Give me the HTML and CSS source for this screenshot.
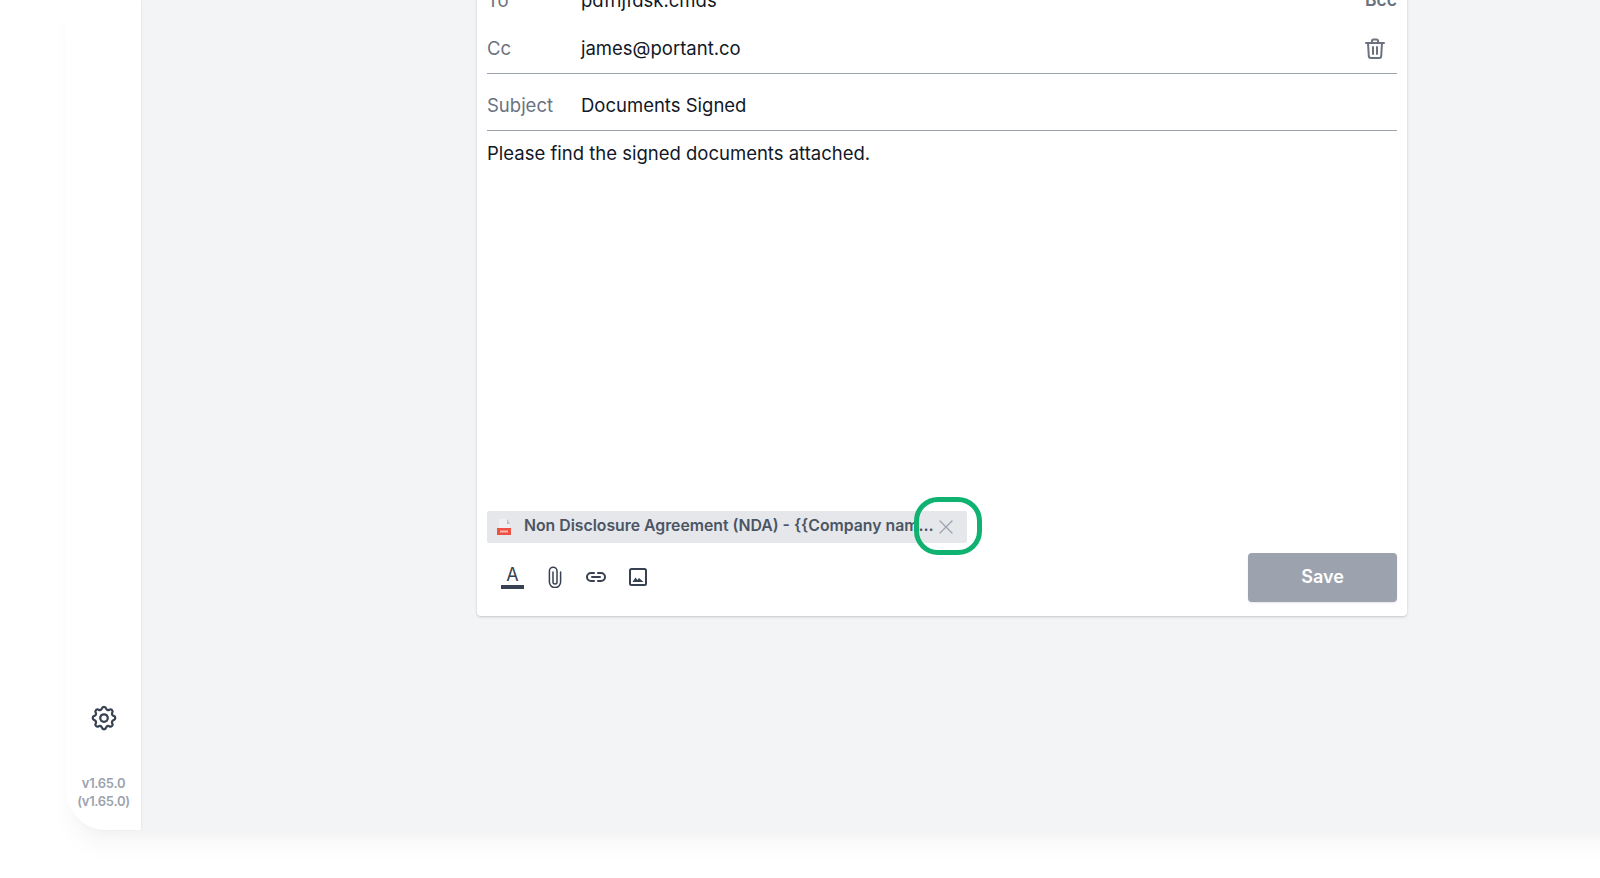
FILE: index.html
```html
<!DOCTYPE html>
<html lang="en">
<head>
<meta charset="utf-8">
<title>Email settings</title>
<link rel="stylesheet" href="styles.css">
</head>
<body>
<div class="app">
  <aside class="sidebar">
    <svg class="gear" viewBox="0 0 24 24" fill="none" stroke="currentColor" stroke-width="1.800" stroke-linecap="round" stroke-linejoin="round"><path d="M10.325 4.317c.426-1.756 2.924-1.756 3.35 0a1.724 1.724 0 0 0 2.573 1.066c1.543-.94 3.31.826 2.37 2.37a1.724 1.724 0 0 0 1.065 2.572c1.756.426 1.756 2.924 0 3.35a1.724 1.724 0 0 0-1.066 2.573c.94 1.543-.826 3.31-2.37 2.37a1.724 1.724 0 0 0-2.572 1.065c-.426 1.756-2.924 1.756-3.35 0a1.724 1.724 0 0 0-2.573-1.066c-1.543.94-3.31-.826-2.37-2.37a1.724 1.724 0 0 0-1.065-2.572c-1.756-.426-1.756-2.924 0-3.35a1.724 1.724 0 0 0 1.066-2.573c-.94-1.543.826-3.31 2.37-2.37.996.608 2.296.07 2.572-1.065z"/><circle cx="12" cy="12" r="3"/></svg>
    <p class="version">v1.65.0<br>(v1.65.0)</p>
  </aside>
  <main class="main">
    <section class="card">
      <div class="row row-to">
        <span class="label">To</span>
        <span class="value">pdfnjfdsk.cmds</span>
        <span class="bcc">Bcc</span>
      </div>
      <div class="row row-cc">
        <span class="label">Cc</span>
        <span class="value">james@portant.co</span>
        <svg class="trash" viewBox="0 0 20 22" fill="none" stroke="currentColor" stroke-width="2" stroke-linecap="round" stroke-linejoin="round"><path d="M1 5h18"/><path d="M3 5l.8 13.2A2 2 0 0 0 5.800 20h8.400a2 2 0 0 0 2-1.800L17 5"/><path d="M7 5V3a1.500 1.500 0 0 1 1.500-1.500h3A1.500 1.500 0 0 1 13 3v2"/><path d="M8 9v7"/><path d="M12 9v7"/></svg>
      </div>
      <div class="row row-subject">
        <span class="label">Subject</span>
        <span class="value">Documents Signed</span>
      </div>
      <div class="body-text">Please find the signed documents attached.</div>
      <div class="chip">
        <svg class="pdf" viewBox="0 0 16 16"><path d="M3 0h8l3 4v12H3z" fill="#eef0f2"/><path d="M11 0l3 5h-3z" fill="#b9bdc4"/><rect x="1" y="9" width="14" height="7" fill="#ef5044"/><rect x="4" y="11.500" width="8" height="2" fill="#f9b5af"/></svg>
        <span class="chip-name">Non Disclosure Agreement (NDA) - {{Company name}} - Signed copy.pdf</span>
        <svg class="chip-x" viewBox="0 0 14 14" fill="none" stroke="currentColor" stroke-width="1.300" stroke-linecap="round"><path d="M1 1l12 12M13 1L1 13"/></svg>
        <span class="ring"></span>
      </div>
      <div class="toolbar">
        <div class="tools">
          <span class="tool-a">A</span>
          <svg class="tool-clip" viewBox="0 0 14 22" fill="none" stroke="currentColor" stroke-width="1.500" stroke-linecap="round" stroke-linejoin="round"><path d="M5 6v10a2 2 0 0 0 4 0V5a3.800 3.800 0 0 0-7.600 0v11a5.600 5.600 0 0 0 11.200 0V6"/></svg>
          <svg class="tool-link" viewBox="0 0 20 10" fill="none" stroke="currentColor" stroke-width="2" stroke-linecap="round"><path d="M8 1H5a4 4 0 0 0 0 8h3"/><path d="M12 1h3a4 4 0 0 1 0 8h-3"/><path d="M6 5h8"/></svg>
          <svg class="tool-image" viewBox="0 0 18 18"><rect x="1" y="1" width="16" height="16" rx="1.500" fill="none" stroke="currentColor" stroke-width="2"/><path d="M3.500 14l3-4.500 2 2.500 1.500-2 4.500 4z" fill="currentColor"/></svg>
        </div>
        <button class="save" type="button">Save</button>
      </div>
    </section>
  </main>
</div>
</body>
</html>
```

FILE: styles.css
```css
* { box-sizing: border-box; }
html, body { margin: 0; height: 100%; }
body {
  background: #fff;
  overflow: hidden;
  font-family: "Inter", "Liberation Sans", sans-serif;
}
.app {
  display: flex;
  height: 830px;
  margin-left: 66px;
  margin-right: -60px;
  border-bottom-left-radius: 40px;
  box-shadow: 0 20px 25px -5px rgba(0,0,0,.04), 0 10px 10px -5px rgba(0,0,0,.02);
}
.sidebar {
  flex: 0 0 75px;
  display: flex;
  flex-direction: column;
  align-items: center;
  justify-content: flex-end;
  padding-bottom: 20px;
  background: #fff;
  border-bottom-left-radius: 40px;
  box-shadow: 1px 0 2px rgba(0,0,0,.05);
  position: relative;
}
.gear { width: 30px; height: 30px; color: #374151; margin-bottom: 41px; }
.version {
  margin: 0;
  color: #9ca3af;
  font-size: 13px;
  font-weight: 600;
  line-height: 18px;
  letter-spacing: -.3px;
  text-align: center;
}
.main {
  flex: 1;
  display: flex;
  flex-direction: column;
  justify-content: flex-end;
  align-items: flex-start;
  padding: 0 0 214px 336px;
  background: #f3f4f6;
  overflow: hidden;
}
.card {
  flex: none;
  width: 930px;
  padding: 0 10px 14px;
  background: #fff;
  border-radius: 4px;
  box-shadow: 0 1px 3px rgba(0,0,0,.14), 0 1px 2px rgba(0,0,0,.06);
}
.row {
  display: flex;
  align-items: center;
  height: 57px;
  font-size: 18.500px;
}
.row-cc, .row-subject { border-bottom: 1px solid #9ca3af; }
.row-subject { padding-top: 6px; }
.row-to { height: 50px; padding-top: 5px; }
.row-cc { height: 52px; padding-top: 1px; }
.label { flex: 0 0 94px; color: #6b7280; }
.value { flex: 1; color: #111827; }
.bcc { color: #6b7280; font-weight: 600; font-size: 17.500px; }
.trash { width: 20px; height: 22px; margin: 2px 12px 0 0; color: #6b7280; }
.body-text {
  height: 380px;
  padding-top: 10px;
  font-size: 18.500px;
  line-height: 24px;
  color: #111827;
}
.chip {
  position: relative;
  display: flex;
  align-items: center;
  width: 480px;
  height: 32px;
  padding: 0 14px 0 9px;
  background: #e5e7eb;
  border-radius: 2px;
}
.pdf { flex: none; width: 16px; height: 16px; margin-right: 12px; }
.chip-name {
  flex: 1;
  min-width: 0;
  padding-bottom: 4px;
  white-space: nowrap;
  overflow: hidden;
  text-overflow: ellipsis;
  color: #4b5563;
  font-size: 15.800px;
  font-weight: 600;
}
.chip-x { flex: none; width: 14px; height: 14px; margin-left: 1px; color: #9ca3af; }
.ring {
  position: absolute;
  top: -14px;
  right: -15px;
  width: 68px;
  height: 58px;
  border: 5px solid #10b272;
  border-radius: 24px;
}
.toolbar {
  display: flex;
  align-items: center;
  justify-content: space-between;
  margin-top: 10px;
}
.tools { display: flex; align-items: center; color: #374151; padding: 0 0 2px 14px; }
.tool-a {
  width: 23px;
  height: 24px;
  border-bottom: 4px solid #374151;
  text-align: center;
  font-size: 18px;
  line-height: 20px;
}
.tool-clip { width: 14px; height: 22px; margin-left: 24px; }
.tool-link { width: 20px; height: 10px; margin-left: 24px; }
.tool-image { width: 18px; height: 18px; margin-left: 23px; }
.save {
  width: 149px;
  height: 49px;
  padding-bottom: 3px;
  border: 0;
  border-radius: 4px;
  background: #9ca3af;
  box-shadow: 0 1px 2px rgba(0,0,0,.1);
  color: #fff;
  font-family: inherit;
  font-size: 18px;
  font-weight: 600;
}
```
